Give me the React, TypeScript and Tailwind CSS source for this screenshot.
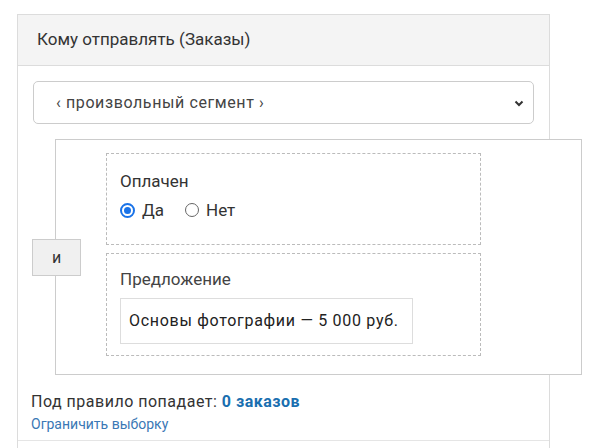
export default function App() {
  return (
    <div className="w-[601px] h-[448px] overflow-hidden bg-white pt-[14px] pl-[17px]" style={{ fontFamily: "Roboto, 'Noto Sans', sans-serif" }}>
      <div className="w-[533px] h-[460px] border border-[#dcdcdc] border-b-0">
        <div className="h-[51px] bg-[#f4f4f4] border-b border-[#dcdcdc] flex items-center pl-[19px] text-[17px] text-[#333]">Кому отправлять (Заказы)</div>
        <div className="pt-[15px] pl-[15px] pr-[15px]">
          <div className="h-[43px] border border-[#ccc] rounded-[5px] flex items-center justify-between pl-[22px] pr-[8px] text-[16px] tracking-[0.6px] text-[#444]">
            <span>‹ произвольный сегмент ›</span>
            <svg width="12" height="12" viewBox="0 0 12 12"><path d="M2.5 4.5 6 8l3.5-3.5" fill="none" stroke="#333" strokeWidth="2" /></svg>
          </div>
          <div className="relative mt-[15px] ml-[22px] w-[527px] h-[236px] border border-[#ccc] bg-white pl-[50px] pt-[13px]">
            <div className="absolute left-[-24px] top-[99px] w-[49px] h-[37px] bg-[#f0f0f0] border border-[#ccc] flex items-center justify-center text-[16px] text-[#333]">и</div>
            <div className="w-[375px] h-[92px] border border-dashed border-[#bbb] pl-[13px] pt-[17px]">
              <div className="text-[17px] text-[#333] leading-[20px]">Оплачен</div>
              <div className="flex items-center mt-[8px] text-[17px] text-[#333] leading-[22px]">
                <span className="w-[15px] h-[15px] rounded-full border-2 border-[#1a73e8] flex items-center justify-center"><span className="w-[7px] h-[7px] rounded-full bg-[#1a73e8]"></span></span>
                <span className="ml-[7px]">Да</span>
                <span className="ml-[21px] w-[14px] h-[14px] rounded-full border border-[#666]"></span>
                <span className="ml-[7px]">Нет</span>
              </div>
            </div>
            <div className="mt-[8px] w-[375px] h-[103px] border border-dashed border-[#bbb] pl-[13px] pt-[15px]">
              <div className="text-[17px] text-[#444] leading-[20px]">Предложение</div>
              <div className="mt-[9px] w-[293px] h-[46px] border border-[#ddd] flex items-center pl-[8px] text-[16px] tracking-[0.7px] text-[#222]">Основы фотографии — 5 000 руб.</div>
            </div>
          </div>
          <div className="mt-[17px] -ml-[2px] text-[16px] tracking-[0.5px] text-[#333] leading-[20px]">Под правило попадает: <span className="font-bold text-[#1a6fb0]">0 заказов</span></div>
          <div className="-ml-[2px] mt-[2px] text-[14px] text-[#3a78b5]">Ограничить выборку</div>
        </div>
        <div className="mt-[5px] border-t border-[#e5e5e5]"></div>
      </div>
    </div>
  );
}
